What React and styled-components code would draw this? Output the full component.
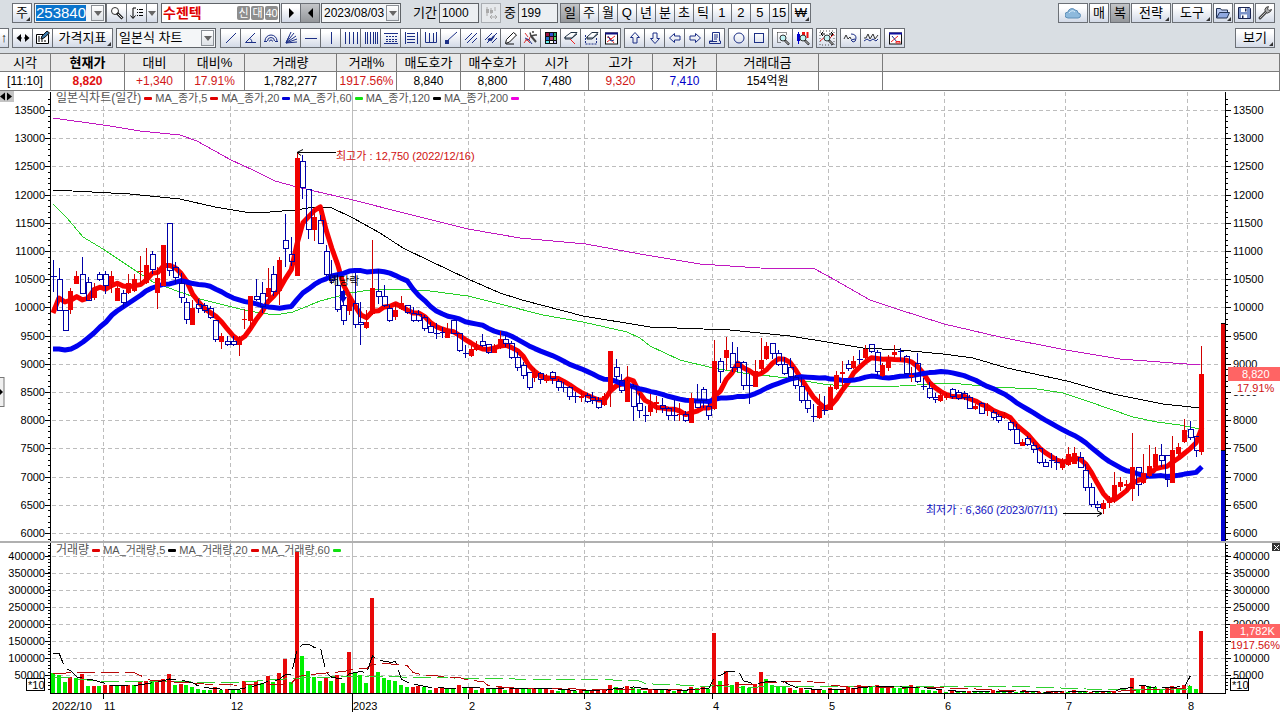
import React, { useState } from "react";
import styled, { createGlobalStyle } from "styled-components";

const COUNT = 199;
const FIRST_X = 53.5;
const STEP = 5.8;
const VOLUME_BASE = 693;

// direction (r = up, b = down), high, body top, body bottom, low
const candleData = `
b260,276,276,291 b268,279,310,310 b310,310,330,330 r288,291,309,313 r271,276,283,283 b257,274,293,293 b277,282,300,300
r283,288,297,299 b272,274,279,280 b271,274,285,293 r271,276,283,292 r286,288,300,300 b290,293,302,307 r274,283,292,293
r274,279,290,291 r256,271,271,283 r248,265,282,283 b251,254,269,273 r267,278,292,308 r245,245,285,285 b223,223,270,275
b262,267,277,283 b273,283,297,302 b298,302,319,323 r300,308,324,324 b299,304,308,312 b303,305,310,312 b306,308,317,318
b320,320,339,341 r333,336,341,348 b336,341,344,345 b336,341,344,345 r336,338,344,355 r309,319,319,328 r296,296,320,328
b279,296,299,300 b282,293,306,312 r268,288,296,300 b266,274,291,295 r257,260,290,304 b214,240,248,266 b237,254,261,265
r152,158,275,275 b155,161,187,198 b189,189,229,238 r210,217,229,240 b215,220,243,243 b245,251,274,275 b260,275,280,283
b273,285,309,311 b290,305,320,324 r292,298,310,314 b273,303,324,327 b302,322,324,344 r310,322,327,328 r240,288,313,314
b269,291,296,303 b285,296,305,306 b305,308,320,321 r303,310,316,319 r296,303,308,309 b305,305,312,313 b307,313,320,321
b310,314,320,321 b315,317,328,330 b322,326,332,332 b323,333,333,338 b327,332,332,337 r323,329,337,337 b320,320,333,333
b333,333,350,351 b345,353,354,357 r346,349,355,356 r341,347,349,350 b334,341,345,346 b344,344,352,353 r344,347,352,352
r331,339,347,348 b335,339,343,346 b341,343,357,358 b352,357,367,370 b362,365,375,378 b372,372,387,389 r368,372,377,381
b372,373,379,383 r374,376,380,382 b371,372,378,383 b379,381,387,390 b382,387,387,391 b386,387,396,399 b392,396,396,402
r391,396,397,401 b393,395,401,402 b392,397,400,403 b397,400,407,408 r393,396,404,405 r351,351,390,406 b359,367,376,380
b374,380,390,392 r366,381,401,401 b384,386,406,420 b393,403,410,417 b406,415,415,421 r394,405,411,415 r396,402,403,412
b398,405,408,412 b407,408,415,419 b400,415,416,420 r403,414,414,420 b411,414,420,421 r393,398,422,422 b384,400,407,407
b387,389,400,407 b403,406,415,419 r340,361,408,409 b358,361,371,382 r337,350,357,369 b342,353,367,371 b347,362,367,371
b361,362,385,389 b374,385,385,403 r360,371,386,386 r338,360,368,372 r342,346,358,359 b343,343,353,358 b350,353,364,365
b357,364,373,374 b358,367,376,377 b375,377,385,388 b377,386,400,402 b392,400,408,412 b404,416,416,421 r394,406,417,418
b396,410,411,414 r385,387,409,409 r371,375,388,389 r361,372,373,389 b360,364,368,370 r356,361,367,368 b350,359,360,363
r345,349,357,358 b344,344,351,352 b350,352,371,375 r363,365,375,376 r355,359,367,370 r345,352,354,357 b348,351,352,360
b355,356,373,373 r367,375,376,381 b353,363,381,382 b378,386,386,389 b382,388,397,398 b393,397,399,402 r391,395,400,401
r393,396,397,399 b388,389,396,398 b390,392,398,399 b391,393,397,399 b395,397,408,408 r404,406,408,409 b402,403,413,413
r403,408,410,415 b410,412,417,419 b414,416,420,422 r412,415,417,418 b420,422,429,430 b424,429,443,443 r439,442,445,445
b436,438,444,445 b442,445,449,452 b447,448,462,463 b459,462,466,466 b453,460,461,467 b456,462,462,469 r458,460,467,469
r447,454,464,465 r447,453,463,463 b452,457,467,467 b464,470,487,490 b483,487,504,506 b501,504,507,509 r500,503,508,513
r496,499,502,507 r472,485,500,502 r477,482,486,490 r480,484,485,490 r433,467,488,500 b467,467,484,495 r454,473,482,483
r445,466,475,476 r447,454,466,466 b444,455,460,466 b455,455,479,486 r436,450,482,482 r443,447,453,455 r419,430,441,442
b421,429,437,439 b436,436,450,456 r346,374,451,454`;

// colour (r / g) and bar height
const volumeData = `
g20 g18 g11 r16 g15 r19 g7 r7 g7 r8 r8 g7 r7 r8 g8 r11 r12 g12 r13 r14 r19 g8 r9 g8 g6 g4 g3 g3 r6 g3 r4 g3 g3 r12 g9
r12 g10 r17 g11 r20 r34 g11 r141 g37 g22 g16 g12 r16 g12 r18 g10 r41 g21 g18 g10 r95 g21 g15 g13 g12 g8 g6 r6 r7 g6 g3
r5 r5 g4 g4 r8 g5 r5 g3 r5 g4 g4 r7 g3 r5 r5 g4 g4 r5 g4 r4 r3 g2 g3 r3 g2 r3 g2 r2 r3 r3 r8 g6 g4 r7 g5 g4 g2 r3 r4 g3
r3 g2 r3 g3 r6 g5 r7 g4 r60 g12 r22 g8 r11 g7 g5 r9 r21 g14 g8 g7 g6 r5 g3 r5 g3 r3 r3 g3 r5 g3 r4 r6 r5 r8 g6 g6 r8 g6
r7 g5 g5 g5 r8 g5 g3 g3 g2 r3 g1 r2 g1 g1 r2 g1 g1 g1 r3 g2 g1 r2 g1 g1 r1 g1 r1 g1 r1 r2 r1 g1 r3 g2 g1 r1 g1 r2 g1 r2
r15 g3 r8 g7 g6 g4 r5 r7 g4 r8 g7 g4 r62`;

const candles = candleData
  .trim()
  .split(/\s+/)
  .map((item) => {
    const [high, top, bottom, low] = item.slice(1).split(",").map(Number);
    const up = item[0] === "r";
    return { up, high, top, bottom, low, close: up ? top : bottom };
  });

const rawVolumes = volumeData
  .trim()
  .split(/\s+/)
  .map((item) => ({ up: item[0] === "r", height: Number(item.slice(1)) }));

// the last bar always belongs to the last candle
const volumes = [...rawVolumes.slice(0, -13).slice(0, COUNT - 13), ...rawVolumes.slice(-13)];
const volumeIndex = (i) => (i < volumes.length - 13 ? i : COUNT - volumes.length + i);

const xAt = (i) => FIRST_X + STEP * i;

const movingAverage = (values, period) => {
  const points = [];
  for (let i = period - 1; i < values.length; i++) {
    const part = values.slice(i - period + 1, i + 1);
    const avg = part.reduce((sum, v) => sum + v, 0) / period;
    points.push(`${xAt(i).toFixed(1)},${avg.toFixed(1)}`);
  }
  return points.join(" ");
};

const closes = candles.map((c) => c.close);
const volumeTops = volumes.map((v) => VOLUME_BASE - v.height);

const ma5 = "53,313 59,298 65,302 71,300 " + movingAverage(closes, 5);
const ma20 =
  "53,349 59,349 65,350 71,349 77,346 83,342 88,338 94,333 100,327 106,322 112,315 117,311 123,307 129,303 135,299 141,295 146,291 152,288 158,286 " +
  movingAverage(closes, 20);
const ma60 =
  "53,204 67,218 83,237 103,249 133,269 153,282 177,291 200,299 240,309 260,313 275,315 293,312 320,301 350,293 377,289 400,289 430,291 468,296 500,304 543,315 583,322 627,332 640,338 650,346 680,360 713,368 743,373 787,378 823,384 853,387 900,386 950,383 993,387 1037,389 1063,393 1087,401 1133,417 1157,422 1180,425 1200,429";
const ma120 =
  "53,190 130,194 180,199 215,207 245,212 270,212 295,210 315,207 330,207 353,218 380,233 403,248 430,261 468,279 500,293 522,300 583,316 650,327 730,330 790,336 833,343 863,348 900,350 943,354 973,358 1007,368 1067,381 1113,394 1163,404 1200,408";
const ma200 =
  "53,118 110,126 140,131 180,135 197,141 231,160 253,170 275,181 297,187 353,200 400,212 468,229 520,238 586,244 640,254 700,264 760,268 815,269 835,280 870,300 900,310 944,324 1000,337 1066,350 1120,359 1200,365";

const volMa5 = "53,653 59,653 65,668 71,671 " + movingAverage(volumeTops, 5);
const volMa20 = "53,674 80,672 133,672 150,680 158,680 " + movingAverage(volumeTops, 20);
const volMa60 =
  "53,677 70,678 95,681 160,681 230,683 270,680 300,678 330,677 370,676 " + movingAverage(volumeTops, 60);

const months = [
  { x: 103, label: "11" },
  { x: 230, label: "12" },
  { x: 352, label: "2023", year: true },
  { x: 468, label: "2" },
  { x: 584, label: "3" },
  { x: 712, label: "4" },
  { x: 828, label: "5" },
  { x: 944, label: "6" },
  { x: 1065, label: "7" },
  { x: 1187, label: "8" },
];

const priceLevels = Array.from({ length: 16 }, (_, i) => ({
  value: 13500 - i * 500,
  y: Math.round(110 + i * 28.2),
}));
const priceTicks = Array.from({ length: 79 }, (_, i) => Math.round(98.7 + i * 5.64));
const volumeLevels = Array.from({ length: 8 }, (_, i) => ({
  value: 400000 - i * 50000,
  y: Math.round(555.5 + i * 17.1),
}));
const volumeTicks = Array.from({ length: 43 }, (_, i) => Math.round(545 + i * 3.42));

const quotes = [
  { title: "시각", value: "[11:10]", width: 51 },
  { title: "현재가", value: "8,820", width: 74, color: "#e01010", bold: true },
  { title: "대비", value: "+1,340", width: 60, color: "#d01818" },
  { title: "대비%", value: "17.91%", width: 60, color: "#d01818" },
  { title: "거래량", value: "1,782,277", width: 92 },
  { title: "거래%", value: "1917.56%", width: 60, color: "#d01818" },
  { title: "매도호가", value: "8,840", width: 64 },
  { title: "매수호가", value: "8,800", width: 64 },
  { title: "시가", value: "7,480", width: 64 },
  { title: "고가", value: "9,320", width: 64, color: "#d01818" },
  { title: "저가", value: "7,410", width: 64, color: "#0000c8" },
  { title: "거래대금", value: "154억원", width: 102 },
  { title: "", value: "", width: 64 },
  { title: "", value: "" },
];

const navy = "#1c2f86";
const line = { fill: "none", stroke: navy, strokeWidth: 1 };

const Icon = ({ children }) => (
  <svg width="16" height="16" viewBox="0 0 16 16" aria-hidden="true">
    {children}
  </svg>
);

const lens = (
  <>
    <path d="M10 10.5l4 4" stroke="#222" strokeWidth="2.4" />
    <path d="M10.5 11l3 3" stroke="#d8d8d8" strokeWidth="1" />
    <circle cx="8" cy="8" r="3" fill="#bff4f4" stroke="#333" />
  </>
);

const drawingTools = [
  ["추세선", <path d="M3 13L13 3" {...line} />],
  ["각도선", <><path d="M12 3L2.500 12.500H13" {...line} /><path d="M7 8.500q2 1.500 2 4" {...line} /></>],
  ["원호", <path d="M2 11a6 6 0 0 1 12 0M4.500 11a3.500 3.500 0 0 1 7 0M6.500 11.500a1.500 1.500 0 0 1 3 0M1 11.500h3M12 11.500h3" {...line} />],
  ["부채꼴", <path d="M3 13L8 2M3 13l8-10M3 13l10-7M3 13l11-4M3 13l11-1M3 12.500l3-6" {...line} />],
  ["수평선", <path d="M2 8.500h12" {...line} />],
  ["수직선", <path d="M8.500 2v12" {...line} />],
  ["시간대", <path d="M2.500 2v12M6.500 2v12M10.500 2v12M14.500 2v12" {...line} />],
  ["피보나치 시간대", <path d="M2.500 2v12M4.500 2v12M7.500 2v12M10.500 2v12M12.500 2v12M14.500 2v12" {...line} />],
  ["피보나치 되돌림", <><path d="M1 3.500h14M1 13.500h14" {...line} /><path d="M3 6.500h11M3 9.500h11M3 11.500h11" {...line} strokeDasharray="2 1" /></>],
  ["조정선", <path d="M2.500 2v12M14.500 2v12M4 3.500h8M4 6.500h8M4 9.500h8M4 12.500h8" {...line} />],
  ["삼등분선", <path d="M2.500 2v10.500h11V2M6.500 3v9M10.500 3v9" {...line} />],
  ["지지선", <><path d="M4 11L14 2" {...line} /><rect x="2" y="10" width="4" height="4" fill={navy} /></>],
  ["평행선", <path d="M2 10l7-7M4 13L14 3M9 13l5-5" {...line} />],
  ["회귀선", <><path d="M2 10l7-7M4 13L14 3M9 13l5-5" {...line} /><path d="M5 10l2-1 1 1 3-4" {...line} strokeWidth="2" /></>],
  ["연필", <path d="M2.500 13.500l1-4 7-7 3 2.500-7 7zM3 14h8" fill="#fff" stroke="#111" />],
  ["추세 설정", <><path d="M2 3l3 4M1 13l3-4 2 1 1-3M2 10h2l3 3" fill="none" stroke="#d33" /><path d="M2 8l4 2 3 4" {...line} /><path d="M8 6l5 6" stroke="#444" strokeWidth="2" /><path d="M7 2.500l1 3.500 4-1M10 3V1M12 5h2" fill="none" stroke="#444" strokeWidth="1.5" /></>],
  ["색상", <><rect x="2" y="2" width="12" height="12" fill="#111" /><path d="M3 3h3v3H3z" fill="#a01040" /><path d="M7 3h3v3H7z" fill="#3050d0" /><path d="M11 3h2v3h-2z" fill="#20b070" /><path d="M3 7h3v3H3z" fill="#2070d0" /><path d="M7 7h3v3H7z" fill="#c04070" /><path d="M11 7h2v3h-2z" fill="#60e060" /><path d="M3 11h3v2H3z" fill="#60f0f0" /><path d="M7 11h3v2H7z" fill="#fff" /><path d="M11 11h2v2h-2z" fill="#c0c0ff" /></>],
  ["지우개", <><path d="M2 7l6-4.500h6L9 8H2zM2 7v2h6l6-5" fill="#fff" stroke="#234" /><path d="M7 9l5 5" stroke="#e22" /></>],
  ["전체 지우개", <><path d="M2.500 5v9h11V8" {...line} strokeDasharray="2 1" /><path d="M4 7l5-4.500h6L10 8H4zM4 7v2h5l6-5" fill="#fff" stroke="#234" /></>],
  ["설정창", <><rect x="2.500" y="3" width="12" height="11" fill="#fff" stroke="#111" /><path d="M2 3.500h13" stroke="#101080" strokeWidth="2" /><path d="M4 12l8-6M4 7l3 1 4 5" fill="none" stroke="#e22" /><path d="M5 6l3 5 3-1" {...line} /></>],
];

const arrow = (turn) => (
  <path d="M8 2.500L3.500 7.500h2.500v5.500h4V7.500h2.500z" {...line} transform={`rotate(${turn} 8 8)`} />
);

const arrowTools = [
  ["위 화살표", arrow(0)],
  ["아래 화살표", arrow(180)],
  ["왼쪽 화살표", arrow(270)],
  ["오른쪽 화살표", arrow(90)],
  ["메모", <path d="M5.500 2.500h7v8.500h1v2.500h-11V11h3zM7 5h4M7 7h4M7 9h3M3 11.500h7" {...line} />],
];

const shapeTools = [
  ["원", <circle cx="8" cy="8" r="5" {...line} />],
  ["사각형", <rect x="3.500" y="3.500" width="9" height="9" {...line} />],
];

const zoomTools = [
  ["영역 확대", <><path d="M2.500 2.500h9v3M2.500 2.500v10h3" fill="none" stroke="#222" strokeDasharray="1 1" />{lens}</>],
  ["봉 확대", <><path d="M3.500 2v12" stroke="#00c" /><path d="M2 4h3v7H2z" fill="#00c" /><path d="M7 2h3v5H7z" fill="#e11" /><path d="M12.500 2v6" stroke="#e11" strokeWidth="2" />{lens}</>],
];

const fitTools = [
  ["전체 보기", <><rect x="1" y="1" width="14" height="14" fill="none" stroke="#555" strokeDasharray="1 2" /><path d="M2 4h4M10 4h4M4 2L2 4l2 2M12 2l2 2-2 2" fill="none" stroke="#000" /><path d="M1 11l5-4 3 3 6-6" fill="none" stroke="#e22" />{lens}</>],
];

const waveTools = [
  ["파동", <><path d="M1 9l2-4 2 4 2-2 1 2" fill="none" stroke="#333" /><path d="M8 4q5 0 5 4t-3 4l-2-2 4-1" {...line} /></>],
  ["파동 비교", <><path d="M1 8l2 0 2-4 2 5 3-5 2 5 3-4" fill="none" stroke="#333" /><path d="M1 11l3-2 3 2 3-2 3 2 2-2" {...line} /></>],
];

const windowTools = [
  ["차트 설정", <><rect x="2.500" y="3" width="12" height="11" fill="#fff" stroke="#111" /><path d="M2 3.500h13" stroke="#1010a0" strokeWidth="2" /><path d="M4 12l7-6" stroke="#e22" /><path d="M5 6l5 6" {...line} /><path d="M9 11.500h4v1.500H9z" stroke="#e22" fill="none" /></>],
];

const ToolGroup = ({ tools, gap }) => (
  <Group $gap={gap}>
    {tools.map(([name, shape]) => (
      <ToolButton key={name} aria-label={name}>
        <Icon>{shape}</Icon>
      </ToolButton>
    ))}
  </Group>
);

const DownMark = () => (
  <svg width="8" height="5" viewBox="0 0 8 5" aria-hidden="true">
    <path d="M0 0h8L4 5z" fill="#666" />
  </svg>
);

const periods = ["일", "주", "월", "Q", "년", "분", "초", "틱", "1", "2", "5", "15"];

const TopToolbar = () => {
  const [code, setCode] = useState("253840");
  const [period, setPeriod] = useState("일");

  return (
    <ToolbarRow>
      <ToolButton $width={20} $corner>
        주
      </ToolButton>
      <ComboBox $width={72} $gap={2}>
        <CodeInput aria-label="종목코드" value={code} onChange={(e) => setCode(e.target.value)} />
        <ComboArrow as="button" aria-label="종목 목록">
          <DownMark />
        </ComboArrow>
      </ComboBox>
      <Group>
        <ToolButton aria-label="종목 검색">
          <Icon>
            <circle cx="6" cy="6" r="3.500" fill="#fff" stroke="#333" />
            <path d="M8 8l5.500 5.500" stroke="#222" strokeWidth="3" />
            <path d="M9 9l4 4" stroke="#ddd" strokeWidth="1" />
          </Icon>
        </ToolButton>
        <ToolButton aria-label="정렬">
          <Icon>
            <path d="M7 3H4v10M1.500 10.500L4 13.500l2.500-3" fill="none" stroke="#000" />
            <path d="M8 4.500h1M10 4.500h4M8 7.500h1M10 7.500h4M8 10.500h1M10 10.500h4" stroke="#000" />
          </Icon>
        </ToolButton>
        <ToolButton $width={12} aria-label="정렬 목록">
          <DownMark />
        </ToolButton>
      </Group>
      <StockName $gap={3}>
        <strong>수젠텍</strong>
        <Chip>신</Chip>
        <Chip>대</Chip>
        <Chip>40</Chip>
      </StockName>
      <Group $gap={1}>
        <ToolButton $width={20} aria-label="다음">
          <Icon>
            <path d="M6 3l5 5-5 5z" fill="#000" />
          </Icon>
        </ToolButton>
        <ToolButton $width={20} $pressed aria-label="이전">
          <Icon>
            <path d="M11 3L6 8l5 5z" fill="#000" />
          </Icon>
        </ToolButton>
      </Group>
      <ComboBox $width={80} $gap={1}>
        <ComboSelect aria-label="날짜" defaultValue="2023/08/03">
          <option>2023/08/03</option>
        </ComboSelect>
        <ComboArrow>
          <DownMark />
        </ComboArrow>
      </ComboBox>
      <FieldLabel htmlFor="range" $gap={12}>
        기간
      </FieldLabel>
      <NumberInput id="range" defaultValue="1000" />
      <ToolButton $width={20} $gap={2} $faded aria-label="간격 조정">
        <Icon>
          <path d="M4 2v9M8 3v6M12 2v4" stroke="#aaa" />
          <path d="M3 4h3v4H3zM7 5h3v3H7z" fill="#aaa" />
          <path d="M7 12h7M9 10l-2 2 2 2M12 10l2 2-2 2" fill="none" stroke="#aaa" />
        </Icon>
      </ToolButton>
      <FieldLabel htmlFor="shown" $gap={3}>
        중
      </FieldLabel>
      <NumberInput id="shown" defaultValue="199" />
      <Group $gap={2}>
        {periods.map((p) => (
          <ToolButton key={p} $width={20} $pressed={p === period} onClick={() => setPeriod(p)}>
            {p}
          </ToolButton>
        ))}
      </Group>
      <ToolButton $width={20} $gap={2} $corner>
        ₩
      </ToolButton>
      <RightTools>
        <ToolButton $width={30} aria-label="클라우드">
          <Icon>
            <path d="M3 13a3 3 0 0 1 0-6 4 4 0 0 1 7-2 3 3 0 0 1 3 3 2.500 2.500 0 0 1 0 5z" fill="#8db9dc" stroke="#5f8fb8" />
            <path d="M4 8q3-4 6-1" fill="none" stroke="#d8ecfa" />
          </Icon>
        </ToolButton>
        <ToolButton $width={20}>매</ToolButton>
        <ToolButton $width={20} $pressed>
          복
        </ToolButton>
        <ToolButton $width={40} $corner>
          전략
        </ToolButton>
        <ToolButton $width={40} $corner>
          도구
        </ToolButton>
        <ToolButton $width={20} $corner aria-label="열기">
          <Icon>
            <path d="M1.500 13V3.500h4l1 1.500h6v3" fill="#b8c8f0" stroke="#223355" />
            <path d="M1.500 13l3-5.500h10L12 13z" fill="#8fa8e0" stroke="#223355" />
          </Icon>
        </ToolButton>
        <ToolButton $width={20} aria-label="저장">
          <Icon>
            <path d="M2.500 2.500h11l1 1v10h-12z" fill="#7c93c8" stroke="#1a2550" />
            <path d="M5 3h6v4H5zM5 9.500h6V13H5z" fill="#fff" />
            <path d="M9 3.500h1.500v3H9zM6 10.500h1.500V13H6z" fill="#1a2550" />
          </Icon>
        </ToolButton>
        <ToolButton $width={20} aria-label="설정">
          <Icon>
            <path d="M3 13l6-6" stroke="#444" strokeWidth="3" strokeLinecap="round" />
            <path d="M3 13l6-6" stroke="#bbb" strokeWidth="1" />
            <path d="M9 2.500q-2 2-.5 4.500t5-.5l1-2-2.500 1-1.500-1.500 1-2.500z" fill="#aaa" stroke="#444" />
          </Icon>
        </ToolButton>
      </RightTools>
    </ToolbarRow>
  );
};

const DrawingToolbar = () => (
  <ToolbarRow $second>
    <CutButton $width={9} aria-label="이동">
      ↑
    </CutButton>
    <Group $gap={3}>
      <ToolButton aria-label="좌우 이동">
        <Icon>
          <path d="M1.500 8L6 4v8zM14.500 8L10 4v8z" fill="#000" />
          <path d="M5 8h2M9 8h2" stroke="#000" />
        </Icon>
      </ToolButton>
      <ToolButton aria-label="편집">
        <Icon>
          <path d="M1.500 4.500h12v9h-12z" fill="#fff" stroke="#000" />
          <path d="M3 7h4M3 9h6M3 11h8" stroke="#000" strokeDasharray="2 1" />
          <path d="M6 9l1-3 5-5 2.500 2L9 8z" fill="#3a78a8" stroke="#111" />
        </Icon>
      </ToolButton>
      <ToolButton $width={61} $corner>
        가격지표
      </ToolButton>
    </Group>
    <ComboBox $width={100} $gap={3}>
      <ComboSelect $large aria-label="차트 종류" defaultValue="일본식 차트">
        <option>일본식 차트</option>
      </ComboSelect>
      <ComboArrow>
        <DownMark />
      </ComboArrow>
    </ComboBox>
    <ToolGroup tools={drawingTools} gap={4} />
    <ToolGroup tools={arrowTools} gap={3} />
    <ToolGroup tools={shapeTools} gap={3} />
    <ToolGroup tools={zoomTools} gap={3} />
    <ToolGroup tools={fitTools} gap={3} />
    <ToolGroup tools={waveTools} gap={3} />
    <ToolGroup tools={windowTools} gap={3} />
    <RightTools>
      <ToolButton $width={40} $corner>
        보기
      </ToolButton>
    </RightTools>
  </ToolbarRow>
);

const QuoteTable = () => (
  <Quotes>
    <colgroup>
      {quotes.map((q, i) => (
        <QuoteCol key={i} $width={q.width} />
      ))}
    </colgroup>
    <thead>
      <tr>
        {quotes.map((q, i) => (
          <QuoteHead key={i} $bold={q.bold}>
            {q.title}
          </QuoteHead>
        ))}
      </tr>
    </thead>
    <tbody>
      <tr>
        {quotes.map((q, i) => (
          <QuoteCell key={i} $bold={q.bold} $color={q.color}>
            {q.value}
          </QuoteCell>
        ))}
      </tr>
    </tbody>
  </Quotes>
);

const Grid = ({ levels, top, bottom }) => (
  <g stroke="#bdbdbd" strokeWidth="1" shapeRendering="crispEdges">
    {levels.map((l) => (
      <line key={l.value} x1="52" x2="1225" y1={l.y + 0.5} y2={l.y + 0.5} strokeDasharray="4 3" />
    ))}
    {months.map((m) => (
      <line
        key={m.x}
        x1={m.x + 0.5}
        x2={m.x + 0.5}
        y1={top}
        y2={bottom}
        strokeDasharray={m.year ? undefined : "4 3"}
      />
    ))}
  </g>
);

const Axis = ({ levels, ticks, top, bottom, covered }) => (
  <>
    <g stroke="#000" strokeWidth="1" shapeRendering="crispEdges">
      <line x1="50.5" x2="50.5" y1={top} y2={bottom} />
      <line x1="1225.5" x2="1225.5" y1={top} y2={bottom} />
      {ticks.map((y) => (
        <path key={y} d={`M48 ${y + 0.5}h3M1225 ${y + 0.5}h3`} />
      ))}
      {levels.map((l) => (
        <path key={l.value} d={`M45 ${l.y + 0.5}h6M1225 ${l.y + 0.5}h6`} />
      ))}
    </g>
    {levels.map((l) => (
      <React.Fragment key={l.value}>
        <ChartText x="45" y={l.y + 4} textAnchor="end">
          {l.value}
        </ChartText>
        {l.value !== covered && (
          <ChartText x="1233" y={l.y + 4}>
            {l.value}
          </ChartText>
        )}
      </React.Fragment>
    ))}
  </>
);

const PriceChart = () => (
  <ChartSvg viewBox="0 91 1280 450" role="img" aria-label="일본식차트">
    <Grid levels={priceLevels} top={92} bottom={541} />
    <g fill="none" strokeWidth="1" shapeRendering="crispEdges">
      <polyline points={ma200} stroke="#c018c0" />
      <polyline points={ma120} stroke="#000" />
      <polyline points={ma60} stroke="#28d028" />
    </g>
    <polyline points={ma5} fill="none" stroke="#f80000" strokeWidth="5" strokeLinejoin="round" />
    <polyline points={ma20} fill="none" stroke="#0000f0" strokeWidth="5" strokeLinejoin="round" />
    <g shapeRendering="crispEdges" strokeWidth="1">
      {candles.map((c, i) => {
        const x = Math.floor(xAt(i));
        const height = c.bottom - c.top;
        if (c.up) {
          return (
            <g key={i}>
              <line x1={x + 0.5} x2={x + 0.5} y1={c.high} y2={c.low + 1} stroke="#d00000" />
              <rect x={x - 2} y={c.top} width="5" height={height + 1} fill="#f00000" />
            </g>
          );
        }
        return (
          <g key={i} stroke="#0000a8" fill="none">
            <path d={`M${x + 0.5} ${c.high}V${c.top}M${x + 0.5} ${c.bottom}V${c.low + 1}`} />
            {height < 2 ? (
              <path d={`M${x - 2} ${c.top + 0.5}h6`} />
            ) : (
              <rect x={x - 1.5} y={c.top + 0.5} width="5" height={height} />
            )}
          </g>
        );
      })}
    </g>
    <path d="M341 291h4v6h2l-4 6-4-6h2z" fill="#0000d0" />
    <ChartText x="329" y="285">
      배당락
    </ChartText>
    <path d="M336 152.500H297M303 149.500l-6 3 4 3" fill="none" stroke="#000" />
    <ChartText x="336" y="160" fill="#d01010">
      최고가 : 12,750 (2022/12/16)
    </ChartText>
    <path d="M1063 513.500h39M1097 510.500l5 3-5 3" fill="none" stroke="#000" />
    <ChartText x="926" y="514" fill="#1010c0">
      최저가 : 6,360 (2023/07/11)
    </ChartText>
    <rect x="1221" y="323" width="4" height="127" fill="#e00808" />
    <rect x="1221" y="450" width="4" height="91" fill="#0000d0" />
    <path d="M1221 323.500h4M1221 450.500h4" stroke="#000" />
    <Axis levels={priceLevels} ticks={priceTicks} top={92} bottom={541} />
    <rect x="1231" y="381" width="49" height="14" fill="#fff" />
    <rect x="1228" y="367" width="52" height="14" fill="#ff6464" />
    <ChartText x="1242" y="378" fill="#fff">
      8,820
    </ChartText>
    <ChartText x="1237" y="392" fill="#d01010">
      17.91%
    </ChartText>
    <rect x="0" y="91" width="14" height="11" fill="#c4c4c4" />
    <path d="M0 96.500l5-4v8zM12 96.500l-5-4v8z" fill="#000" />
    <rect x="-1" y="377.5" width="5" height="29" fill="#f0f0f0" stroke="#777" />
    <path d="M0 389l3 3-3 3z" fill="#000" />
  </ChartSvg>
);

const VolumeChart = () => (
  <ChartSvg viewBox="0 543 1280 169" role="img" aria-label="거래량">
    <Grid levels={volumeLevels} top={543} bottom={693} />
    <g shapeRendering="crispEdges">
      {volumes.map((v, i) => (
        <rect
          key={i}
          x={Math.floor(xAt(volumeIndex(i))) - 2}
          y={VOLUME_BASE - v.height}
          width="4"
          height={v.height}
          fill={v.up ? "#e80808" : "#00f000"}
        />
      ))}
    </g>
    <g fill="none" strokeWidth="1" strokeDasharray="18 6" shapeRendering="crispEdges">
      <polyline points={volMa60} stroke="#30d030" />
      <polyline points={volMa20} stroke="#b80808" />
      <polyline points={volMa5} stroke="#000" />
    </g>
    <Axis levels={volumeLevels} ticks={volumeTicks} top={543} bottom={693} covered={150000} />
    <g stroke="#000" shapeRendering="crispEdges">
      <line x1="50" x2="1226" y1="693.5" y2="693.5" />
      {months.map((m) => (
        <line key={m.x} x1={m.x + 0.5} x2={m.x + 0.5} y1="693" y2={m.year ? 712 : 699} />
      ))}
    </g>
    <ChartText x="52" y="710">
      2022/10
    </ChartText>
    {months.map((m) => (
      <ChartText key={m.x} x={m.x + 1} y="710">
        {m.label}
      </ChartText>
    ))}
    <g fill="#fff" stroke="#000" shapeRendering="crispEdges">
      <rect x="26.5" y="678.5" width="18" height="12" />
      <rect x="1230.5" y="678.5" width="18" height="12" />
    </g>
    <ChartText x="28" y="689">
      *10
    </ChartText>
    <ChartText x="1232" y="689">
      *10
    </ChartText>
    <rect x="1230" y="624" width="50" height="14" fill="#ff6464" />
    <ChartText x="1240" y="635" fill="#fff">
      1,782K
    </ChartText>
    <ChartText x="1280" y="649" textAnchor="end" fill="#d01010">
      1917.56%
    </ChartText>
  </ChartSvg>
);

const App = () => (
  <>
    <GlobalStyle />
    <Page>
      <Toolbars>
        <TopToolbar />
        <DrawingToolbar />
      </Toolbars>
      <QuoteTable />
      <Pane>
        <PriceChart />
        <Legend>
          <LegendTitle>일본식차트(일간)</LegendTitle>
          <Swatch $color="#e00000" />
          MA_종가,5
          <Swatch $color="#e00000" />
          MA_종가,20
          <Swatch $color="#0000d8" />
          MA_종가,60
          <Swatch $color="#10e010" />
          MA_종가,120
          <Swatch $color="#000" />
          MA_종가,200
          <Swatch $color="#f000e0" />
        </Legend>
      </Pane>
      <Pane $divided>
        <VolumeChart />
        <Legend>
          <LegendTitle>거래량</LegendTitle>
          <Swatch $color="#e00000" />
          MA_거래량,5
          <Swatch $color="#000" />
          MA_거래량,20
          <Swatch $color="#e00000" />
          MA_거래량,60
          <Swatch $color="#10e010" />
        </Legend>
        <CloseButton aria-label="닫기">
          <svg width="7" height="7" viewBox="0 0 7 7" aria-hidden="true">
            <path d="M1 1l5 5M6 1L1 6" stroke="#fff" />
          </svg>
        </CloseButton>
      </Pane>
    </Page>
  </>
);

// Styled Components
const GlobalStyle = createGlobalStyle`
  * {
    box-sizing: border-box;
  }

  body {
    margin: 0;
    background: #fff;
    font-family: "Liberation Sans", "Noto Sans CJK KR", sans-serif;
    font-size: 12px;
    color: #000;
  }

  button, input, select {
    font-family: inherit;
    color: inherit;
  }
`;

const Page = styled.div`
  overflow: hidden;
`;

const Toolbars = styled.header`
  background: #d9dee3;
`;

const ToolbarRow = styled.div`
  display: flex;
  align-items: center;
  height: ${(props) => (props.$second ? "28px" : "25px")};
  padding: ${(props) => (props.$second ? "3px 5px 5px 0" : "3px 5px 2px 12px")};
`;

const Group = styled.div`
  display: flex;
  margin-left: ${(props) => props.$gap || 0}px;

  button + button {
    margin-left: -1px;
  }
`;

const ToolButton = styled.button`
  position: relative;
  display: flex;
  flex: none;
  align-items: center;
  justify-content: center;
  width: ${(props) => props.$width || 21}px;
  height: 20px;
  margin: 0 0 0 ${(props) => props.$gap || 0}px;
  padding: 0;
  border: 1px solid ${(props) => (props.$faded ? "#a9adb2" : "#6c7076")};
  background: ${(props) =>
    props.$pressed
      ? "linear-gradient(#c4c6c9, #94979b)"
      : props.$faded
        ? "#e6e9ec"
        : "linear-gradient(#ffffff 20%, #d3dae7)"};
  font-size: 13px;
  line-height: 16px;
  white-space: nowrap;

  svg {
    flex: none;
  }

  &::after {
    content: "";
    display: ${(props) => (props.$corner ? "block" : "none")};
    position: absolute;
    right: 1px;
    bottom: 1px;
    border-left: 4px solid transparent;
    border-bottom: 4px solid #333;
  }
`;

const CutButton = styled(ToolButton)`
  border-left: none;
`;

const RightTools = styled.div`
  display: flex;
  gap: 1px;
  margin-left: auto;
`;

const ComboBox = styled.div`
  display: flex;
  flex: none;
  width: ${(props) => props.$width}px;
  height: 20px;
  margin-left: ${(props) => props.$gap || 0}px;
  padding: 1px;
  border: 1px solid #5f6368;
  background: #f4f6f8;
`;

const CodeInput = styled.input`
  width: 50px;
  min-width: 0;
  padding: 0;
  border: none;
  background: #0a74cc;
  color: #fff;
  font-size: 15px;
  line-height: 16px;
`;

const ComboSelect = styled.select`
  flex: 1;
  min-width: 0;
  padding: 0 0 0 1px;
  border: none;
  appearance: none;
  background: transparent;
  font-size: ${(props) => (props.$large ? "13px" : "12px")};
  line-height: 16px;
`;

const ComboArrow = styled.span`
  display: flex;
  flex: none;
  align-items: center;
  justify-content: center;
  width: 13px;
  margin-left: auto;
  padding: 0;
  border: 1px solid #8b9096;
  background: linear-gradient(#fff, #dde1e6);
  pointer-events: none;
`;

const StockName = styled.div`
  display: flex;
  flex: none;
  align-items: center;
  gap: 1px;
  width: 119px;
  height: 20px;
  margin-left: ${(props) => props.$gap}px;
  padding: 0 1px;
  border: 1px solid #5f6368;
  background: #fff;

  strong {
    margin-right: auto;
    color: #e00000;
    font-size: 14px;
    line-height: 16px;
  }
`;

const Chip = styled.span`
  width: 13px;
  height: 14px;
  border-radius: 2px;
  background: #8e8e8e;
  color: #fff;
  font-size: 11px;
  line-height: 14px;
  text-align: center;
`;

const FieldLabel = styled.label`
  flex: none;
  margin: 0 2px 0 ${(props) => props.$gap}px;
  font-size: 13px;
  line-height: 16px;
`;

const NumberInput = styled.input`
  width: 40px;
  height: 20px;
  padding: 0 2px;
  border: 1px solid #5f6368;
  background: #eceff2;
  font-size: 12px;
`;

const Quotes = styled.table`
  width: 100%;
  height: 38px;
  table-layout: fixed;
  border-collapse: separate;
  border-spacing: 0;
  border-top: 1px solid #7b7b7b;
`;

const QuoteCol = styled.col`
  width: ${(props) => (props.$width ? `${props.$width}px` : "auto")};
`;

const QuoteHead = styled.th`
  height: 18px;
  padding: 0;
  border-right: 1px solid #7b7b7b;
  border-bottom: 1px solid #7b7b7b;
  background: #eaeaea;
  font-size: 13px;
  font-weight: ${(props) => (props.$bold ? "bold" : "normal")};
  line-height: 16px;
`;

const QuoteCell = styled.td`
  height: 19px;
  padding: 0;
  border-right: 1px solid #7b7b7b;
  border-bottom: 1px solid #7b7b7b;
  background: #fff;
  color: ${(props) => props.$color || "#000"};
  font-size: 12px;
  font-weight: ${(props) => (props.$bold ? "bold" : "normal")};
  line-height: 16px;
  text-align: center;
`;

const Pane = styled.section`
  position: relative;
  border-top: ${(props) => (props.$divided ? "2px solid #b0b0b0" : "none")};
`;

const ChartSvg = styled.svg`
  display: block;
  width: 100%;
  height: auto;
`;

const ChartText = styled.text`
  font-size: 11px;
`;

const Legend = styled.div`
  position: absolute;
  top: 0;
  left: 56px;
  display: flex;
  align-items: center;
  gap: 3px;
  height: 14px;
  color: #555;
  font-size: 11px;
  line-height: 14px;
`;

const LegendTitle = styled.span`
  font-size: 12px;
`;

const Swatch = styled.i`
  width: 8px;
  height: 3px;
  border-radius: 1px;
  background: ${(props) => props.$color};
`;

const CloseButton = styled.button`
  position: absolute;
  top: 0;
  right: 0;
  display: flex;
  align-items: center;
  justify-content: center;
  width: 8px;
  height: 8px;
  padding: 0;
  border: none;
  background: #333;
`;

export default App;
